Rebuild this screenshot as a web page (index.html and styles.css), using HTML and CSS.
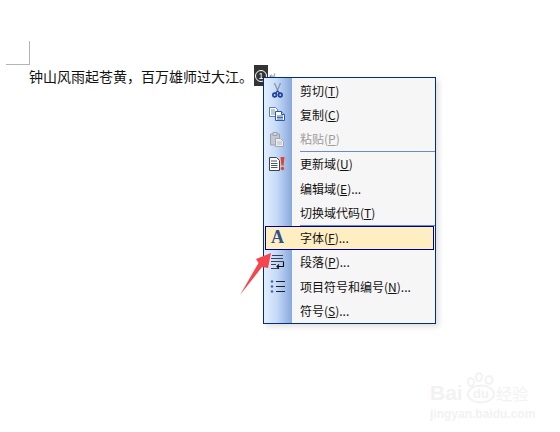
FILE: index.html
```html
<!DOCTYPE html>
<html lang="zh">
<head>
<meta charset="utf-8">
<title>字体菜单</title>
<link rel="stylesheet" href="styles.css">
</head>
<body>
<div class="doc">
  <div class="corner"></div>
  <p class="line">钟山风雨起苍黄，百万雄师过大江。<span class="field"><span class="circled">1</span></span><span class="mark">↵</span></p>
</div>

<div class="menu">
  <div class="item">
    <span class="ic"><svg viewBox="0 0 11 15" width="11" height="15"><path d="M2.500 0l3.500 8.500M8.500 0L5 8.500" stroke="#8a94a6" stroke-width="1.300" fill="none"/><circle cx="2.700" cy="12" r="1.800" fill="none" stroke="#1f3f9c" stroke-width="1.700"/><circle cx="8.300" cy="12" r="1.800" fill="none" stroke="#1f3f9c" stroke-width="1.700"/><path d="M3.500 10l2-2 2 2" stroke="#1f3f9c" stroke-width="1.200" fill="none"/></svg></span>
    <span>剪切(<u>T</u>)</span>
  </div>
  <div class="item">
    <span class="ic"><svg viewBox="0 0 16 14" width="16" height="14"><path d="M.5 .5h6l2 2v7H.5z" fill="#fff" stroke="#5a7fb8"/><path d="M2 3h4M2 5h4M2 7h4" stroke="#7a8fb0"/><path d="M6.500 4.500h6l3 3v6h-9z" fill="#fff" stroke="#2a5aa8"/><path d="M12.500 4.500v3h3" fill="#b9cdee" stroke="#2a5aa8"/><path d="M8 9h6M8 10.500h6M8 12h6" stroke="#3d6cb5"/></svg></span>
    <span>复制(<u>C</u>)</span>
  </div>
  <div class="item off">
    <span class="ic"><svg viewBox="0 0 16 16" width="16" height="16"><path d="M1.500 3h9v11h-9z" fill="#c3c8d1" stroke="#9aa1ad"/><path d="M4 1.500h4v3H4z" fill="#d8dbe0" stroke="#9aa1ad"/><path d="M6.500 7.500h5l3 3v5h-8z" fill="#eceef1" stroke="#a0a6b0"/><path d="M8 11h5M8 13h5" stroke="#b4b9c2"/></svg></span>
    <span>粘贴(<u>P</u>)</span>
  </div>
  <div class="sep"></div>
  <div class="item">
    <span class="ic"><svg viewBox="0 0 16 14" width="16" height="14"><path d="M.5 .5h7l3 3v10H.5z" fill="#fff" stroke="#3c4454"/><path d="M2 4h6M2 6.500h6.500M2 8.500h6.500M2 10.500h6.500" stroke="#4c5566"/><path d="M11.500 0h4l-1 8.500h-2z" fill="#e8402a"/><circle cx="13.500" cy="11.500" r="1.700" fill="#e8402a"/></svg></span>
    <span>更新域(<u>U</u>)</span>
  </div>
  <div class="item">
    <span class="ic"></span>
    <span>编辑域(<u>E</u>)...</span>
  </div>
  <div class="item">
    <span class="ic"></span>
    <span>切换域代码(<u>T</u>)</span>
  </div>
  <div class="sep"></div>
  <div class="item hot">
    <span class="ic ic-a">A</span>
    <span>字体(<u>F</u>)...</span>
  </div>
  <div class="item">
    <span class="ic"><svg viewBox="0 0 15 16" width="15" height="16"><path d="M2 1.500h11M1 4.500h12M1 7.500h13M1 10.500h5M1 14.500h8" stroke="#3a4256"/><path d="M13.500 8v4.500H7M9 10.500l-2 2 2 2" stroke="#111" stroke-width="1.100" fill="none"/></svg></span>
    <span>段落(<u>P</u>)...</span>
  </div>
  <div class="item">
    <span class="ic"><svg viewBox="0 0 15 14" width="15" height="14"><path d="M6 2.500h9M6 7.500h9M6 12.500h9" stroke="#1c2230"/><circle cx="2" cy="2.500" r="1.300" fill="#4467ae"/><circle cx="2" cy="7.500" r="1.300" fill="#4467ae"/><circle cx="2" cy="12.500" r="1.300" fill="#4467ae"/></svg></span>
    <span>项目符号和编号(<u>N</u>)...</span>
  </div>
  <div class="item">
    <span class="ic"></span>
    <span>符号(<u>S</u>)...</span>
  </div>
</div>

<svg class="arrow" viewBox="0 0 40 56" width="40" height="56"><path d="M32 7L17 13 19.500 17 1 49 23 21 29 22z" fill="#f6464c"/></svg>

<div class="wm">
  <div class="wm-top">
    <span class="wm-bai">Bai</span>
    <span class="wm-paw">
      <svg viewBox="0 0 32 32" width="32" height="32"><ellipse cx="16" cy="22" rx="13" ry="8.500" fill="none" stroke="#f2f2f2" stroke-width="2"/><ellipse cx="6" cy="10" rx="3" ry="4" fill="none" stroke="#f2f2f2" stroke-width="2"/><ellipse cx="14" cy="5" rx="3" ry="4" fill="none" stroke="#f2f2f2" stroke-width="2"/><ellipse cx="24" cy="8" rx="3.500" ry="4" fill="none" stroke="#f2f2f2" stroke-width="2"/></svg>
      <span class="wm-du">du</span>
    </span>
    <span class="wm-jy">经验</span>
  </div>
  <div class="wm-url">jingyan.baidu.com</div>
</div>
</body>
</html>
```
FILE: styles.css
```css
html, body {
  margin: 0;
  padding: 0;
  background: #fff;
}
body {
  width: 560px;
  height: 432px;
  overflow: hidden;
  position: relative;
  font-family: "Noto Sans CJK SC", "Liberation Sans", sans-serif;
  color: #000;
}
.doc {
  padding: 41px 0 0 6px;
}
.corner {
  width: 23px;
  height: 23px;
  border-right: 1px solid #b4b4b4;
  border-bottom: 1px solid #b4b4b4;
}
.line {
  margin: 0;
  padding-left: 23px;
  font-size: 14px;
  height: 21px;
  display: flex;
  align-items: center;
  white-space: nowrap;
  color: #111;
}
.field {
  width: 14px;
  height: 21px;
  background: #333;
  margin-left: 1px;
  display: flex;
  align-items: center;
  justify-content: center;
}
.circled {
  width: 12px;
  height: 12px;
  box-sizing: border-box;
  border: 1px solid #fff;
  border-radius: 50%;
  color: #fff;
  font: 9px/10px "Liberation Sans", sans-serif;
  text-align: center;
}
.mark {
  font-size: 9px;
  color: #888;
  margin-left: 1px;
}
.menu {
  position: absolute;
  left: 263px;
  top: 77px;
  width: 171px;
  height: 245px;
  border: 1px solid #002d7e;
  background: linear-gradient(90deg, #e3efff 0, #c5d9f7 13px, #87a9dc 28px, #f6f6f6 28px);
  box-shadow: 3px 3px 5px rgba(120, 120, 120, .22);
  font-size: 12px;
}
.item {
  display: flex;
  align-items: center;
  height: 24.25px;
  color: #111;
}
.ic {
  width: 26px;
  flex: none;
  margin-right: 10px;
  display: flex;
  justify-content: center;
  align-items: center;
}
.off {
  color: #9c9c9c;
}
.sep {
  height: 1px;
  margin-left: 36px;
  background: #6a8cc8;
}
.hot {
  background: #ffeec2;
  box-shadow: inset 0 0 0 1px #000080;
  margin: 0 1px;
}
.hot .ic {
  width: 25px;
}
.ic-a {
  font-family: "Liberation Serif", serif;
  font-weight: 700;
  font-size: 18px;
  color: #2f4f8f;
}
.arrow {
  position: absolute;
  left: 239px;
  top: 246px;
}
.wm {
  position: absolute;
  left: 430px;
  top: 372px;
  width: 104px;
  color: #f2f2f2;
}
.wm-top {
  display: flex;
  align-items: flex-end;
  height: 32px;
}
.wm-bai {
  font: 700 21px/22px "Liberation Sans", sans-serif;
  width: 35px;
}
.wm-paw {
  flex: none;
  width: 32px;
  height: 32px;
  position: relative;
}
.wm-du {
  position: absolute;
  left: 8px;
  top: 15px;
  font: 700 13px/14px "Liberation Sans", sans-serif;
}
.wm-jy {
  font-size: 16px;
  line-height: 22px;
  margin-left: -1px;
  white-space: nowrap;
}
.wm-url {
  font: 700 12px/14px "Liberation Sans", sans-serif;
  margin-top: 3px;
  white-space: nowrap;
}
```
